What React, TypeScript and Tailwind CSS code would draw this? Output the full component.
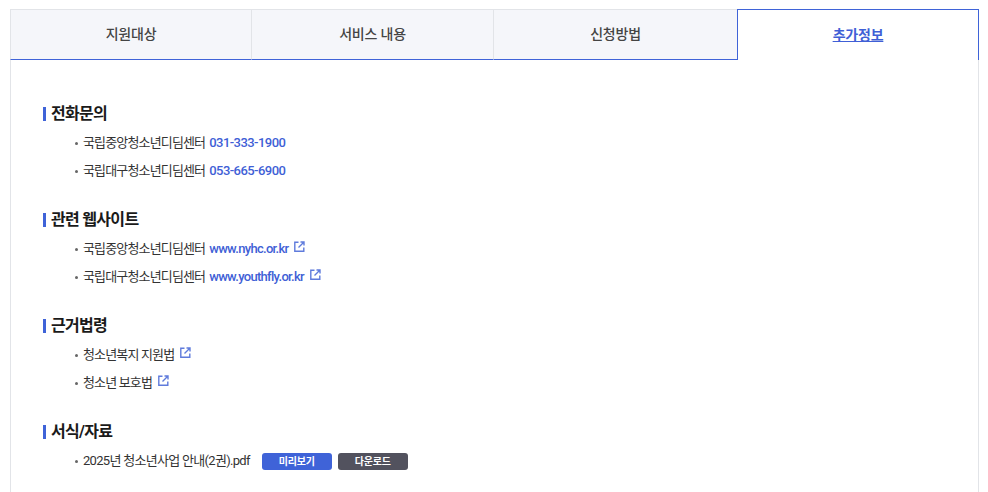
const fontStack = 'font-["Roboto","Noto_Sans_CJK_KR",sans-serif]'

const tabs = ['지원대상', '서비스 내용', '신청방법']

function ExternalIcon() {
  return (
    <svg width="11" height="11" viewBox="0 0 11 11" fill="none" stroke="#5f7bdc" strokeWidth="1.4" className="mb-[5px] ml-[6px] inline-block">
      <path d="M4.5 1.2H0.8V10.2H9.8V6.5" />
      <path d="M4.5 6.5L9.5 1.5M6.5 1H10V4.5" />
    </svg>
  )
}

function Section({ title, children }: { title: string; children: React.ReactNode }) {
  return (
    <section className="mb-[21px]">
      <h3 className="flex h-[27px] items-center text-[16px] font-bold tracking-[-0.7px] text-[#1a1a1a]">
        <span className="mr-[5px] h-[14px] w-[3px] bg-[#3f63d8]" />
        {title}
      </h3>
      <ul className="pl-[31px] pt-[2px]">{children}</ul>
    </section>
  )
}

function Item({ children }: { children: React.ReactNode }) {
  return (
    <li className="flex h-[28px] items-center text-[13px] tracking-[-0.85px] text-[#333333]">
      <span className="ml-[1px] mr-[5px] h-[3px] w-[3px] rounded-full bg-[#666666]" />
      {children}
    </li>
  )
}

const linkClass = 'ml-[4px] font-medium tracking-[-0.55px] text-[#3f5fd6]'
const urlClass = 'ml-[4px] font-medium tracking-[-0.7px] text-[#3f5fd6]'

export default function App() {
  return (
    <div className={`${fontStack} h-[492px] overflow-hidden bg-white pl-[10px] pr-[9px] pt-[9px]`}>
      <div className="flex h-[51px]">
        {tabs.map((t, i) => (
          <div
            key={t}
            className={`flex h-[51px] items-center justify-center border-b border-t border-b-[#3f63d8] border-t-[#e2e4e8] border-r-[#e2e4e8] bg-[#f5f6fa] text-[14px] font-medium tracking-[-0.2px] text-[#444444] ${i === 0 ? 'w-[242px] border-l border-l-[#e2e4e8] border-r' : i === 1 ? 'w-[242px] border-r' : 'w-[243px]'}`}
          >
            {t}
          </div>
        ))}
        <div className="flex h-[51px] w-[242px] items-center justify-center border border-b-0 border-[#3f63d8] bg-white text-[14px] font-bold tracking-[-0.2px] text-[#3f5fd6] underline">
          추가정보
        </div>
      </div>
      <div className="h-[432px] border-x border-[#e2e4e8] pl-[32px] pt-[40px]">
        <Section title="전화문의">
          <Item>
            국립중앙청소년디딤센터<span className={linkClass}>031-333-1900</span>
          </Item>
          <Item>
            국립대구청소년디딤센터<span className={linkClass}>053-665-6900</span>
          </Item>
        </Section>
        <Section title="관련 웹사이트">
          <Item>
            국립중앙청소년디딤센터<span className={urlClass}>www.nyhc.or.kr</span>
            <ExternalIcon />
          </Item>
          <Item>
            국립대구청소년디딤센터<span className={urlClass}>www.youthfly.or.kr</span>
            <ExternalIcon />
          </Item>
        </Section>
        <Section title="근거법령">
          <Item>
            청소년복지 지원법
            <ExternalIcon />
          </Item>
          <Item>
            청소년 보호법
            <ExternalIcon />
          </Item>
        </Section>
        <Section title="서식/자료">
          <Item>
            <span className="tracking-[-0.7px]">2025년 청소년사업 안내(2권).pdf</span>
            <span className="ml-[12px] flex h-[17px] w-[70px] items-center justify-center rounded-[3px] bg-[#3f63d8] text-[10px] font-bold tracking-[-0.2px] text-white">
              미리보기
            </span>
            <span className="ml-[6px] flex h-[17px] w-[70px] items-center justify-center rounded-[3px] bg-[#52525e] text-[10px] font-bold tracking-[-0.2px] text-white">
              다운로드
            </span>
          </Item>
        </Section>
      </div>
    </div>
  )
}
